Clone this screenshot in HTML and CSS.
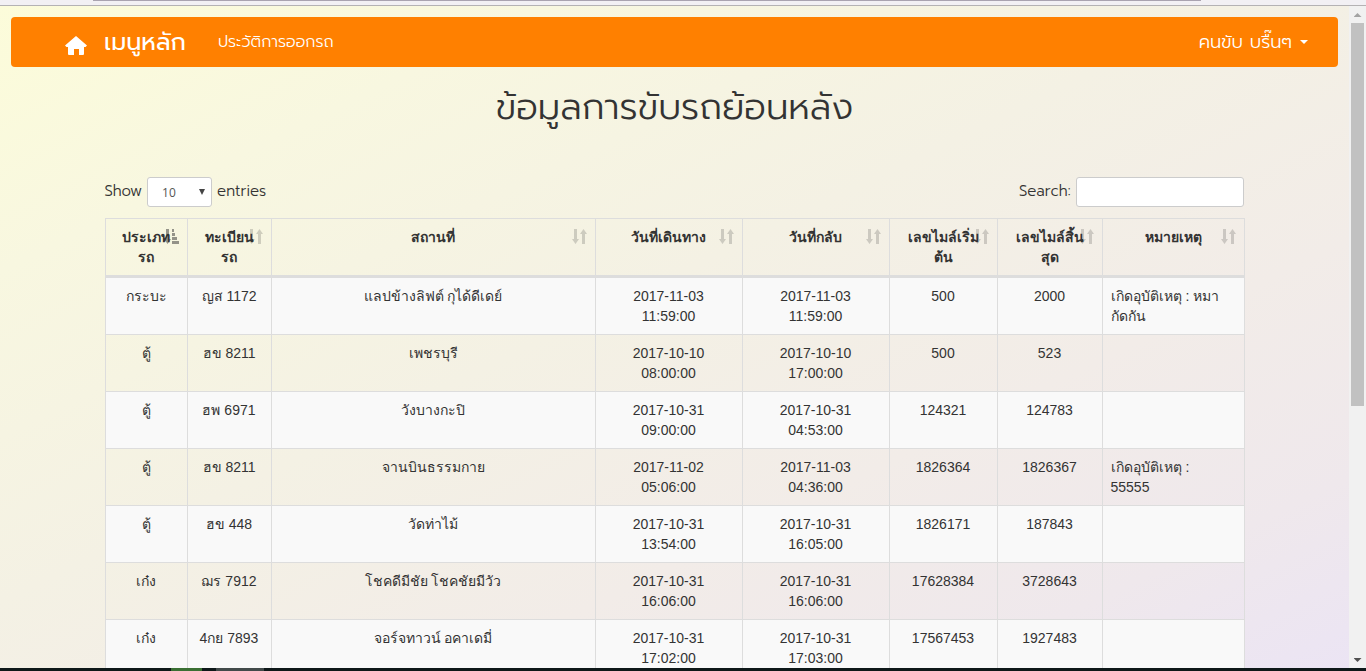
FILE: index.html
```
<!DOCTYPE html>
<html lang="th">
<head>
<meta charset="utf-8">
<title>ข้อมูลการขับรถย้อนหลัง</title>
<link rel="stylesheet" href="styles.css">
</head>
<body>
<svg class="sprite" aria-hidden="true">
  <symbol id="sort" viewBox="0 0 15 15"><path d="M2 0h3v10h2L3.500 15 0 10h2zM10 15V5H8l3.500-5L15 5h-2v10z"/></symbol>
  <symbol id="sort-active" viewBox="0 0 15 15"><path d="M2 0h3v10h2L3.500 15 0 10h2zM8 0h2v3H8zM8 4h3v3H8zM8 8h5v3H8zM8 12h7v3H8z"/></symbol>
</svg>
<div class="chrome-top"><div class="address-edge"></div></div>
<div class="viewport">
  <div class="page">
    <nav class="navbar">
      <a class="brand" href="#">
        <svg class="home" viewBox="0 0 22 19" aria-hidden="true"><path d="M11 0 22 9.500 20.500 11H19v7q0 1-1 1h-4v-6H9v6H4q-1 0-1-1v-7H1.500L0 9.500z"/></svg>
        <span>เมนูหลัก</span>
      </a>
      <a class="nav-link" href="#">ประวัติการออกรถ</a>
      <button class="user" type="button">คนขับ บรื๊นๆ<span class="caret"></span></button>
    </nav>
    <main class="container">
      <h1>ข้อมูลการขับรถย้อนหลัง</h1>
      <div class="controls">
        <label>Show
          <span class="select-wrap"><select><option>10</option><option>25</option><option>50</option></select></span>
          entries</label>
        <label>Search: <input type="search"></label>
      </div>
      <table>
        <colgroup><col class="c-type"><col class="c-plate"><col><col class="c-date"><col class="c-date"><col class="c-start"><col class="c-end"><col class="c-note"></colgroup>
        <thead>
          <tr>
            <th class="active">ประเภท<br>รถ<svg class="sort"><use href="#sort-active"/></svg></th>
            <th>ทะเบียน<br>รถ<svg class="sort"><use href="#sort"/></svg></th>
            <th>สถานที่<svg class="sort"><use href="#sort"/></svg></th>
            <th>วันที่เดินทาง<svg class="sort"><use href="#sort"/></svg></th>
            <th>วันที่กลับ<svg class="sort"><use href="#sort"/></svg></th>
            <th>เลขไมล์เริ่ม<br>ต้น<svg class="sort"><use href="#sort"/></svg></th>
            <th>เลขไมล์สิ้น<br>สุด<svg class="sort"><use href="#sort"/></svg></th>
            <th>หมายเหตุ<svg class="sort"><use href="#sort"/></svg></th>
          </tr>
        </thead>
        <tbody>
          <tr><td>กระบะ</td><td>ญส 1172</td><td>แลปข้างลิฟต์ กุได้ดีเดย์</td><td>2017-11-03<br>11:59:00</td><td>2017-11-03<br>11:59:00</td><td>500</td><td>2000</td><td>เกิดอุบัติเหตุ : หมา<br>กัดกัน</td></tr>
          <tr><td>ตู้</td><td>ฮข 8211</td><td>เพชรบุรี</td><td>2017-10-10<br>08:00:00</td><td>2017-10-10<br>17:00:00</td><td>500</td><td>523</td><td></td></tr>
          <tr><td>ตู้</td><td>ฮพ 6971</td><td>วังบางกะปิ</td><td>2017-10-31<br>09:00:00</td><td>2017-10-31<br>04:53:00</td><td>124321</td><td>124783</td><td></td></tr>
          <tr><td>ตู้</td><td>ฮข 8211</td><td>จานบินธรรมกาย</td><td>2017-11-02<br>05:06:00</td><td>2017-11-03<br>04:36:00</td><td>1826364</td><td>1826367</td><td>เกิดอุบัติเหตุ :<br>55555</td></tr>
          <tr><td>ตู้</td><td>ฮข 448</td><td>วัดท่าไม้</td><td>2017-10-31<br>13:54:00</td><td>2017-10-31<br>16:05:00</td><td>1826171</td><td>187843</td><td></td></tr>
          <tr><td>เก๋ง</td><td>ฌร 7912</td><td>โชคดีมีชัย โชคชัยมีวัว</td><td>2017-10-31<br>16:06:00</td><td>2017-10-31<br>16:06:00</td><td>17628384</td><td>3728643</td><td></td></tr>
          <tr><td>เก๋ง</td><td>4กย 7893</td><td>จอร์จทาวน์ อคาเดมี่</td><td>2017-10-31<br>17:02:00</td><td>2017-10-31<br>17:03:00</td><td>17567453</td><td>1927483</td><td></td></tr>
        </tbody>
      </table>
    </main>
  </div>
  <div class="scrollbar"><i class="arrow up"></i><div class="track"><div class="thumb"></div></div><i class="arrow down"></i></div>
</div>
<div class="taskbar"><span class="task-green"></span><span class="task-gray"></span></div>
</body>
</html>
```
FILE: styles.css
```
* { box-sizing: border-box; }
body {
  margin: 0;
  height: 100vh;
  display: flex;
  flex-direction: column;
  overflow: hidden;
  font: 14px/20px "Liberation Sans", Arial, sans-serif;
  color: #333;
}
.sprite { display: none; }
.chrome-top {
  flex: none;
  height: 6px;
  padding: 0 165px 0 93px;
  background: #f2f0f4;
  border-bottom: 1px solid #b4b2b4;
}
.address-edge { height: 1px; background: #a9a3b0; }
.viewport {
  flex: 1;
  min-height: 0;
  display: flex;
  background: linear-gradient(to bottom right, #fcfcda 0%, #f8f7e0 20%, #f4f1e4 45%, #f2ece8 67%, #efe8ec 85%, #ebe4f4 100%);
}
.page { flex: 1; min-width: 0; overflow: hidden; padding: 11px 11px 0; }
.navbar {
  display: flex;
  align-items: center;
  height: 50px;
  padding: 0 30px 0 54px;
  border-radius: 4px;
  background: #ff8000;
  font-family: Prompt, "Noto Sans Thai", "Open Sans", sans-serif;
  font-weight: 300;
}
.navbar a, .user { color: #fff; text-decoration: none; }
.brand { display: flex; align-items: center; gap: 17px; font-size: 24px; font-weight: 400; }
.home { width: 22px; height: 19px; margin-top: 6px; fill: #fff; }
.nav-link { margin-left: 32px; font-size: 16px; }
.user {
  display: flex;
  align-items: center;
  gap: 8px;
  margin-left: auto;
  padding: 0;
  border: 0;
  background: none;
  font: inherit;
  font-size: 18px;
}
.caret { border: 4px solid transparent; border-top-color: #fff; border-bottom: 0; }
.container { max-width: 1140px; margin: 0 auto; }
h1 {
  margin: 20px 0 50px;
  font: 300 36px/40px Prompt, "Noto Sans Thai", "Open Sans", sans-serif;
  text-align: center;
}
.controls {
  display: flex;
  justify-content: space-between;
  margin-bottom: 11px;
  padding-right: 1px;
  font: 300 15px/28px Prompt, "Open Sans", sans-serif;
}
.controls label { display: flex; gap: 5px; }
.select-wrap { position: relative; display: flex; }
.select-wrap::after {
  content: "";
  position: absolute;
  right: 7px;
  top: 12px;
  border: 3px solid transparent;
  border-top: 6px solid #444;
  border-bottom: 0;
}
select, input {
  height: 30px;
  border: 1px solid #ccc;
  border-radius: 3px;
  background: #fff;
  color: #555;
}
select { appearance: none; width: 65px; padding: 0 14px; font: 12px "Open Sans", sans-serif; }
input { width: 168px; padding: 5px 10px; }
table {
  width: 100%;
  table-layout: fixed;
  border-collapse: separate;
  border-spacing: 0;
  border: 1px solid #ddd;
  border-width: 1px 0 0 1px;
}
.c-type { width: 82px; }
.c-plate { width: 84px; }
.c-date { width: 147px; }
.c-start { width: 108px; }
.c-end { width: 105px; }
.c-note { width: 142px; }
th, td {
  padding: 8px;
  border: 1px solid #ddd;
  border-width: 0 1px 1px 0;
  text-align: center;
  vertical-align: top;
  white-space: nowrap;
}
th { position: relative; border-bottom-width: 3px; }
td:last-child { text-align: left; }
tbody tr:nth-child(odd) { background: #f9f9f9; }
.sort { position: absolute; right: 8px; top: 10px; width: 15px; height: 15px; fill: #333; opacity: 0.2; }
.active .sort { opacity: 0.5; }
.scrollbar {
  flex: none;
  width: 17px;
  display: flex;
  flex-direction: column;
  align-items: center;
  background: #f1f1f1;
}
.track { flex: 1; width: 13px; }
.thumb { height: 61%; background: #c1c1c1; }
.arrow { width: 8px; height: 4px; margin: 7px 0 6px; background: #a3a3a3; }
.up { clip-path: polygon(50% 0, 100% 100%, 0 100%); }
.down { background: #505050; clip-path: polygon(0 0, 100% 0, 50% 100%); }
.taskbar { flex: none; display: flex; gap: 14px; height: 3px; padding-left: 171px; background: #0e1819; }
.task-green { width: 31px; background: #3a6f33; }
.task-gray { width: 48px; background: #424a4a; }
```
